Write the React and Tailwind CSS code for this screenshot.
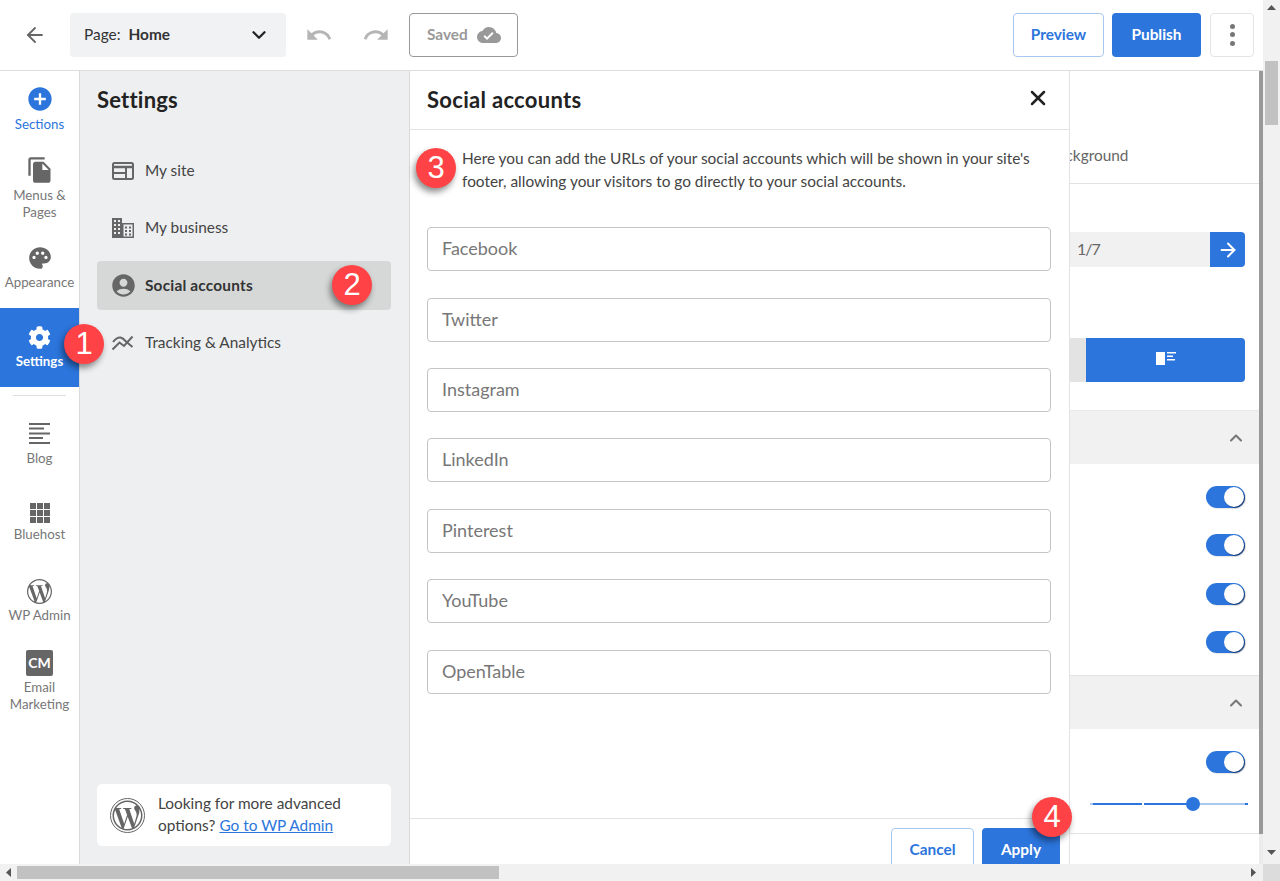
import React from 'react';
import { ArrowLeft, ChevronDown, ChevronUp, X, ArrowRight } from 'lucide-react';
import {
  MdAddCircle,
  MdFileCopy,
  MdPalette,
  MdUndo,
  MdRedo,
  MdCloudDone,
  MdAccountCircle,
} from 'react-icons/md';
import { FaCog, FaWordpressSimple } from 'react-icons/fa';
import { SiWordpress } from 'react-icons/si';

const Badge = ({ n, className = '' }) => (
  <div
    className={`absolute z-20 w-10 h-10 rounded-full bg-[#ff4245] text-white text-[31px] leading-10 text-center font-['Liberation_Sans',sans-serif] shadow-[-2px_4px_6px_rgba(0,0,0,0.45)] ${className}`}
  >
    {n}
  </div>
);

const BlogIcon = () => (
  <svg width="21" height="21" viewBox="0 0 21 21" fill="#666">
    <rect x="0" y="0" width="21" height="2" />
    <rect x="0" y="4.5" width="15" height="2" />
    <rect x="0" y="9.5" width="21" height="2" />
    <rect x="0" y="14" width="14" height="2" />
    <rect x="0" y="19" width="21" height="2" />
  </svg>
);

const GridIcon = () => (
  <svg width="20" height="20" viewBox="0 0 20 20" fill="#666">
    {[0, 7, 14].map((y) =>
      [0, 7, 14].map((x) => <rect key={`${x}-${y}`} x={x} y={y} width="6" height="6" />)
    )}
  </svg>
);

const SiteIcon = () => (
  <svg width="22" height="18" viewBox="0 0 22 18" fill="none" stroke="#666" strokeWidth="2">
    <rect x="1" y="1" width="20" height="16" rx="1.5" />
    <path d="M1 5h20" strokeWidth="2.5" />
    <path d="M2 11h12M14 5v12" />
  </svg>
);

const BuildingIcon = () => (
  <svg width="22" height="20" viewBox="0 0 22 20" fill="#666">
    <rect x="0" y="0" width="10" height="20" />
    <rect x="10" y="5" width="12" height="15" />
    <rect x="11.5" y="6.5" width="9" height="12" fill="#eeeff1" />
    {[2, 6, 10, 14].map((y) =>
      [2, 6].map((x) => <rect key={`${x}-${y}`} x={x} y={y} width="2" height="2" fill="#eeeff1" />)
    )}
    {[8.5, 12, 15.5].map((y) =>
      [13, 17].map((x) => <rect key={`${x}-${y}`} x={x} y={y} width="2" height="2" />)
    )}
  </svg>
);

const TrackingIcon = () => (
  <svg width="22" height="16" viewBox="0 0 22 16" fill="none" stroke="#666" strokeWidth="2">
    <path d="M0.5 14.5 L7.5 7.5 L12 11 L20.5 1.5" />
    <path d="M1 7 Q5 2 8.5 2.5 Q11 3 14 6.5 L20.5 12" />
  </svg>
);

const Toggle = () => (
  <div className="w-[39px] h-[22px] rounded-full bg-[#2c75dc] relative shadow-[1px_1px_1px_rgba(0,0,0,0.1)]">
    <div className="absolute right-0 top-0 w-[20px] h-[20px] mt-px mr-px rounded-full bg-white shadow-[1px_1px_1px_rgba(10,40,90,0.8)]"></div>
  </div>
);

const RailItem = ({ icon, label, className = '', labelClass = 'text-[#777]', gap = 'mt-[6px]' }) => (
  <div className={`flex flex-col items-center text-center ${className}`}>
    <div className="flex items-center justify-center">{icon}</div>
    <div className={`text-[13.3px] leading-[17px] ${gap} ${labelClass}`}>{label}</div>
  </div>
);

const Rail = () => (
  <div className="w-20 shrink-0 border-r border-[#d9d9d9] bg-white flex flex-col h-full">
    <RailItem
      className="pt-[14px] h-[70px]"
      icon={<MdAddCircle size={28} className="text-[#2c75dc]" />}
      label="Sections"
      labelClass="text-[#2c75dc]"
      gap="mt-[3px]"
    />
    <RailItem
      className="pt-[15px] h-[88px]"
      icon={<MdFileCopy size={28} className="text-[#666]" />}
      label={<>Menus &<br />Pages</>}
      gap="mt-[3px]"
    />
    <RailItem
      className="pt-[16px] h-[79px]"
      icon={<MdPalette size={26} className="text-[#666]" />}
      label="Appearance"
      gap="mt-[3px]"
    />
    <RailItem
      className="pt-[18px] h-[79px] bg-[#2c75dc] w-[79px]"
      icon={<FaCog size={23} className="text-white" />}
      label="Settings"
      labelClass="text-white font-bold"
      gap="mt-[4px]"
    />
    <div className="h-px bg-[#e0e0e0] mx-[13px] mt-2 w-[53px]"></div>
    <RailItem className="pt-[27px] h-[79px]" icon={<BlogIcon />} label="Blog" gap="mt-[6px]" />
    <RailItem className="pt-[28px] h-[89px]" icon={<GridIcon />} label="Bluehost" gap="mt-[3px]" />
    <RailItem
      className="pt-[15px] h-[76px]"
      icon={<SiWordpress size={25} className="text-[#666]" />}
      label="WP Admin"
      gap="mt-[3px]"
    />
    <RailItem
      className="pt-[10px]"
      icon={
        <div className="w-[27px] h-[26px] rounded-[2px] bg-[#666] text-white text-[14px] leading-[26px] font-bold text-center">
          CM
        </div>
      }
      label={<>Email<br />Marketing</>}
      gap="mt-[3px]"
    />
  </div>
);

const NavRow = ({ icon, label, active }) => (
  <div
    className={`h-[49px] flex items-center pl-[15px] rounded-[4px] text-[15.4px] ${
      active ? 'bg-[#d6d8d8] font-bold text-[#333] tracking-[0.2px]' : 'text-[#444]'
    }`}
  >
    <div className="w-[22px] flex items-center justify-center">{icon}</div>
    <span className="ml-[11px]">{label}</span>
  </div>
);

const SettingsPanel = () => (
  <div className="w-[330px] shrink-0 bg-[#eeeff1] border-r border-[#d9d9d9] px-[17px] flex flex-col h-full">
    <div className="text-[22px] font-bold text-[#222] leading-[26px] mt-4 tracking-[0.2px]">Settings</div>
    <div className="flex flex-col gap-[8.3px] mt-[33.2px] w-[294px]">
      <NavRow icon={<SiteIcon />} label="My site" />
      <NavRow icon={<BuildingIcon />} label="My business" />
      <NavRow icon={<MdAccountCircle size={27} className="text-[#666] shrink-0" />} label="Social accounts" active />
      <NavRow icon={<TrackingIcon />} label="Tracking & Analytics" />
    </div>
    <div className="mt-auto mb-[18px] w-[294px] h-[62px] bg-white rounded-[5px] flex items-center pl-[13px]">
      <div className="w-[35px] h-[35px] shrink-0 rounded-full border border-[#666] flex items-center justify-center">
        <FaWordpressSimple size={31} className="text-[#666]" />
      </div>
      <div className="ml-[13px] -mt-[2px] text-[15.4px] leading-[22px] text-[#444]">
        Looking for more advanced
        <br />
        options? <a className="text-[#2c75dc] underline">Go to WP Admin</a>
      </div>
    </div>
  </div>
);

const FIELDS = ['Facebook', 'Twitter', 'Instagram', 'LinkedIn', 'Pinterest', 'YouTube', 'OpenTable'];

const ModalPanel = () => (
  <div className="w-[660px] shrink-0 bg-white border-r border-[#e2e2e2] flex flex-col h-full">
    <div className="h-[59px] shrink-0 border-b border-[#e2e2e2] flex items-center justify-between pl-[17px] pr-[19px]">
      <div className="text-[22px] font-bold text-[#222] -mt-[1px] tracking-[0.3px]">Social accounts</div>
      <X size={24} strokeWidth={2.5} className="text-[#222] -mt-[5px]" />
    </div>
    <div className="pl-[52px] pr-4 pt-[17px] text-[15.4px] leading-[23px] text-[#444] h-[97.2px] shrink-0">
      Here you can add the URLs of your social accounts which will be shown in your site's
      <br />
      footer, allowing your visitors to go directly to your social accounts.
    </div>
    <div className="flex flex-col gap-[26.4px] px-[17px]">
      {FIELDS.map((f) => (
        <input
          key={f}
          placeholder={f}
          className="w-[624px] h-11 shrink-0 rounded-[4px] border border-[#c4c4c4] px-[14px] pb-[2px] text-[18px] bg-white placeholder:text-[#777] outline-none"
        />
      ))}
    </div>
    <div className="mt-auto h-[46px] shrink-0 border-t border-[#e2e2e2] flex justify-end gap-2 pt-[9px] pr-[9px] overflow-hidden">
      <button className="w-[83px] h-11 shrink-0 rounded-[4px] border border-[#a9c8ef] text-[#2c75dc] text-[15.4px] font-bold pb-px">
        Cancel
      </button>
      <button className="w-[78px] h-11 shrink-0 rounded-[4px] bg-[#2c75dc] text-white text-[15.4px] font-bold pb-px">
        Apply
      </button>
    </div>
  </div>
);

const RightPanel = () => (
  <div className="w-[189px] shrink-0 bg-white flex flex-col h-full overflow-hidden text-[#666]">
    <div className="h-[113px] shrink-0 border-b border-[#e2e2e2] overflow-hidden pt-[73px] text-[15.4px] leading-[22px] text-[#666] whitespace-nowrap">
      <span className="block -ml-[22px]">Background</span>
    </div>
    <div className="mt-[48px] h-[35px] flex w-[175px] shrink-0">
      <div className="w-[140px] bg-[#f1f1f1] pl-[7px] text-[16px] tracking-[-1px] leading-[34px] text-[#666]">1/7</div>
      <div className="w-[35px] bg-[#2c75dc] rounded-r-[4px] flex items-center justify-center">
        <ArrowRight size={22} strokeWidth={2.2} className="text-white" />
      </div>
    </div>
    <div className="mt-[71px] h-[44px] flex w-[175px] shrink-0">
      <div className="w-4 bg-[#e3e3e3]"></div>
      <div className="w-[159px] bg-[#2c75dc] rounded-r-[4px] flex items-center justify-center pb-[4px]">
        <svg width="20" height="13" viewBox="0 0 20 13" fill="white">
          <rect x="0" y="0" width="9" height="13" />
          <rect x="11" y="0" width="9" height="1.5" />
          <rect x="11" y="3.5" width="6" height="1.5" />
          <rect x="11" y="7" width="8" height="1.5" />
        </svg>
      </div>
    </div>
    <div className="mt-7 h-[54px] shrink-0 bg-[#f1f1f1] border-t border-[#e8e8e8] flex items-center justify-end pr-[13px]">
      <ChevronUp size={20} strokeWidth={2.5} className="text-[#777]" />
    </div>
    <div className="flex flex-col items-end gap-[26.3px] pr-[14px] pt-[22px] pb-[22px] h-[211px] shrink-0">
      <Toggle />
      <Toggle />
      <Toggle />
      <Toggle />
    </div>
    <div className="h-[54px] shrink-0 bg-[#f1f1f1] border-t border-[#e2e2e2] flex items-center justify-end pr-[13px]">
      <ChevronUp size={20} strokeWidth={2.5} className="text-[#777]" />
    </div>
    <div className="flex justify-end pr-[14px] pt-[22px] shrink-0">
      <Toggle />
    </div>
    <div className="relative mt-[21px] h-[20px] shrink-0">
      <div className="absolute left-5 top-[9px] w-[3px] h-[2px] bg-[#a9c8ef]"></div>
      <div className="absolute left-[23px] top-[9px] w-[49px] h-[2px] bg-[#2c75dc]"></div>
      <div className="absolute left-[74px] top-[9px] w-[49px] h-[2px] bg-[#2c75dc]"></div>
      <div className="absolute left-[123px] top-[9px] w-[52px] h-[2px] bg-[#a9c8ef]"></div>
      <div className="absolute left-[175px] top-[9px] w-[3px] h-[2px] bg-[#2c75dc]"></div>
      <div className="absolute left-[116px] top-[3px] w-[14px] h-[14px] rounded-full bg-[#2c75dc]"></div>
    </div>
    <div className="mt-[19px] border-t border-[#e2e2e2] h-px shrink-0"></div>
  </div>
);

const TopBar = () => (
  <div className="h-[71px] shrink-0 border-b border-[#dedede] bg-white flex items-center pb-px">
    <ArrowLeft size={24} strokeWidth={1.8} className="text-[#666] ml-[23px]" />
    <div className="ml-[23px] w-[216px] h-11 bg-[#f1f2f3] rounded-[4px] flex items-center pl-[14px] pr-[16px] text-[15.4px] text-[#333]">
      <span>Page:</span>
      <span className="ml-[8px] font-bold">Home</span>
      <ChevronDown size={22} strokeWidth={2.5} className="ml-auto text-[#222]" />
    </div>
    <MdUndo size={28} className="ml-[19px] text-[#b5b5b5]" />
    <MdRedo size={28} className="ml-[29px] text-[#b5b5b5]" />
    <div className="ml-[19px] w-[109px] h-11 rounded-[4px] border border-[#999] flex items-center pl-[17px] gap-[9px] text-[15.4px] font-bold text-[#999]">
      Saved
      <MdCloudDone size={24} className="text-[#999]" />
    </div>
    <button className="ml-auto w-[91px] h-11 rounded-[4px] border border-[#a9c8ef] text-[#2c75dc] text-[15.4px] font-bold">
      Preview
    </button>
    <button className="ml-2 w-[89px] h-11 rounded-[4px] bg-[#2c75dc] text-white text-[15.4px] font-bold">
      Publish
    </button>
    <div className="ml-[9px] mr-[9px] w-11 h-11 rounded-[4px] border border-[#e4e4e4] flex flex-col items-center justify-center gap-[3.5px]">
      <div className="w-[5px] h-[5px] rounded-full bg-[#777]"></div>
      <div className="w-[5px] h-[5px] rounded-full bg-[#777]"></div>
      <div className="w-[5px] h-[5px] rounded-full bg-[#777]"></div>
    </div>
  </div>
);

const Arrow = ({ dir }) => {
  const paths = {
    up: 'M0 5 L4.5 0 L9 5 Z',
    down: 'M0 0 L9 0 L4.5 5 Z',
    left: 'M5 0 L5 9 L0 4.5 Z',
    right: 'M0 0 L0 9 L5 4.5 Z',
  };
  return (
    <svg width="9" height="9" viewBox="0 0 9 9" fill="#555">
      <path d={paths[dir]} />
    </svg>
  );
};

export default function App() {
  return (
    <div className="w-[1280px] h-[881px] overflow-hidden flex flex-col bg-white font-['Lato',sans-serif] relative">
      <div className="flex h-[864px] shrink-0">
        <div className="w-[1263px] shrink-0 flex flex-col h-full">
          <TopBar />
          <div className="flex h-[793px]">
            <Rail />
            <SettingsPanel />
            <ModalPanel />
            <RightPanel />
            <div className="w-1 shrink-0 flex flex-col">
              <div className="h-[763px] bg-[#999]"></div>
              <div className="flex-1 bg-[#ececec]"></div>
            </div>
          </div>
        </div>
        <div className="w-[17px] shrink-0 bg-[#f1f1f1] flex flex-col items-center pt-[5px] pb-[5px]">
          <Arrow dir="up" />
          <div className="w-[13px] h-[64px] bg-[#c1c1c1] mt-[47px]"></div>
          <div className="mt-auto"><Arrow dir="down" /></div>
        </div>
      </div>
      <div className="h-[17px] shrink-0 flex">
        <div className="w-[1263px] bg-[#f1f1f1] flex items-center pl-[6px] pr-[3px]">
          <Arrow dir="left" />
          <div className="w-[482px] h-[13px] bg-[#c1c1c1] ml-[2px]"></div>
          <div className="ml-auto"><Arrow dir="right" /></div>
        </div>
        <div className="w-[17px] bg-[#dcdcdc]"></div>
      </div>
      <Badge n="1" className="left-[64px] top-[324px]" />
      <Badge n="2" className="left-[332px] top-[265px]" />
      <Badge n="3" className="left-[416px] top-[148px]" />
      <Badge n="4" className="left-[1032px] top-[797px]" />
    </div>
  );
}
